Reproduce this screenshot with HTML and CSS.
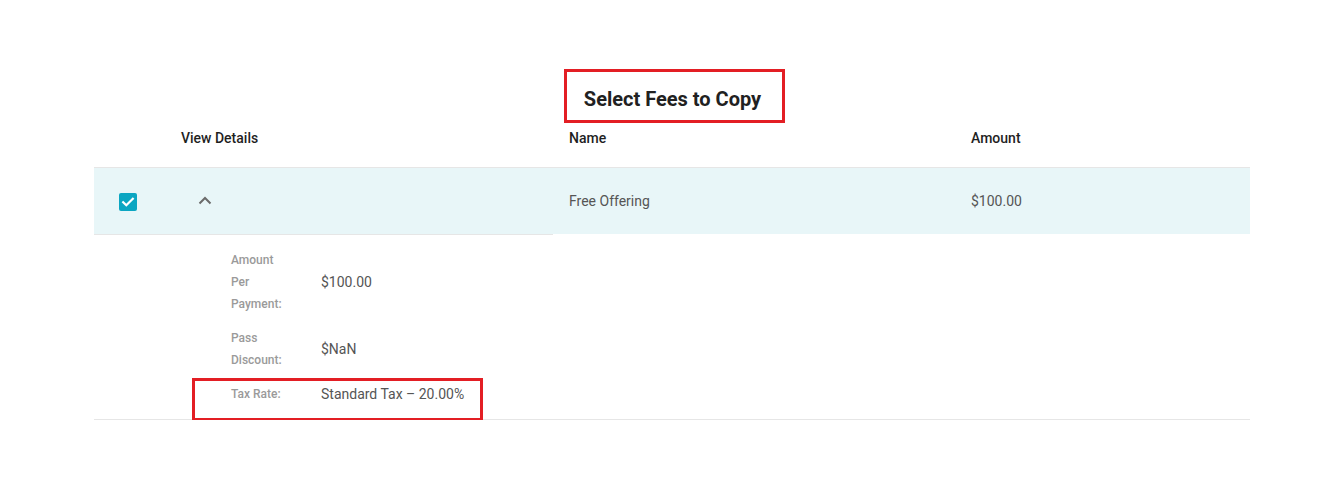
FILE: index.html
```html
<!DOCTYPE html>
<html lang="en">
<head>
<meta charset="utf-8">
<title>Select Fees to Copy</title>
<link rel="stylesheet" href="styles.css">
</head>
<body>
  <div class="panel">
    <div class="title-wrap">
      <h2 class="title">Select Fees to Copy</h2>
    </div>

    <div class="fee-table">
      <div class="grid head">
        <div class="cell"></div>
        <div class="cell pad">View Details</div>
        <div class="cell pad">Name</div>
        <div class="cell pad">Amount</div>
      </div>

      <div class="grid row selected">
        <div class="cell check-cell">
          <span class="checkbox">
            <svg viewBox="0 0 18 18" width="18" height="18"><path d="M4.2 9.2l3.1 3 6.5-6.5" fill="none" stroke="#fff" stroke-width="2.2" stroke-linecap="square"/></svg>
          </span>
        </div>
        <div class="cell pad">
          <button class="toggle" type="button" aria-label="Collapse">
            <svg viewBox="0 0 24 24" width="24" height="24"><path d="M6.5 14.5l5.5-5.5 5.5 5.5" fill="none" stroke="#6b6b6b" stroke-width="2"/></svg>
          </button>
        </div>
        <div class="cell pad body-text">Free Offering</div>
        <div class="cell pad body-text">$100.00</div>
      </div>

      <div class="grid details">
        <div class="detail-cell">
          <dl class="detail-list">
            <div class="detail-row">
              <dt>Amount Per Payment:</dt>
              <dd>$100.00</dd>
            </div>
            <div class="detail-row">
              <dt>Pass Discount:</dt>
              <dd>$NaN</dd>
            </div>
            <div class="detail-row marked">
              <dt>Tax Rate:</dt>
              <dd>Standard Tax &ndash; 20.00%</dd>
              <span class="mark"></span>
            </div>
          </dl>
        </div>
      </div>
    </div>
  </div>
</body>
</html>
```

FILE: styles.css
```css
* {
  box-sizing: border-box;
}

html, body {
  margin: 0;
  background: #fff;
}

body {
  font-family: Roboto, "Liberation Sans", Arial, sans-serif;
  color: #212121;
}

.panel {
  width: 1156px;
  margin-left: 94px;
  padding-top: 69px;
}

.title-wrap {
  display: flex;
  justify-content: center;
}

.title {
  margin: 0;
  margin-left: 5px;
  padding: 3px 21px 0 17px;
  border: 3px solid #e31e24;
  font-size: 20px;
  font-weight: 700;
  line-height: 48px;
  height: 54px;
  color: #212121;
}

.grid {
  display: grid;
  grid-template-columns: 71px 388px 402px 1fr;
}

.cell.pad {
  padding-left: 16px;
}

.head {
  height: 44px;
  font-size: 14px;
  font-weight: 500;
  line-height: 20px;
  padding-top: 5px;
  color: #1f1f1f;
}

.row {
  height: 67px;
  align-items: center;
  border-top: 1px solid #e6e6e6;
}

.row.selected {
  background: #e8f6f8;
}

.check-cell {
  padding-left: 25px;
  display: flex;
  align-items: center;
}

.checkbox {
  width: 18px;
  height: 18px;
  border-radius: 2px;
  background: #0ba6c2;
  display: block;
  margin-top: 1px;
}

.checkbox svg {
  display: block;
}

.toggle {
  width: 48px;
  height: 32px;
  padding: 0;
  border: 0;
  background: none;
  display: flex;
  align-items: center;
  justify-content: center;
}

.toggle svg {
  display: block;
}

.body-text {
  font-size: 14px;
  color: #555;
  line-height: 20px;
}

.details {
  border-bottom: 1px solid #e6e6e6;
}

.detail-cell {
  grid-column: 1 / span 2;
  border-top: 1px solid #e6e6e6;
  padding: 14px 0 14px 137px;
}

.detail-list {
  margin: 0;
  display: flex;
  flex-direction: column;
  gap: 12px;
}

.detail-row {
  display: flex;
  align-items: center;
}

.detail-row dt {
  width: 58px;
  margin-right: 32px;
  font-size: 12px;
  line-height: 22px;
  color: #9a9a9a;
  font-weight: 500;
}

.detail-row dd {
  margin: 0;
  font-size: 14px;
  color: #555;
  line-height: 20px;
  white-space: nowrap;
}

.marked {
  position: relative;
}

.mark {
  position: absolute;
  top: -5px;
  left: -39px;
  width: 291px;
  height: 43px;
  border: 3px solid #e31e24;
  pointer-events: none;
}
```
